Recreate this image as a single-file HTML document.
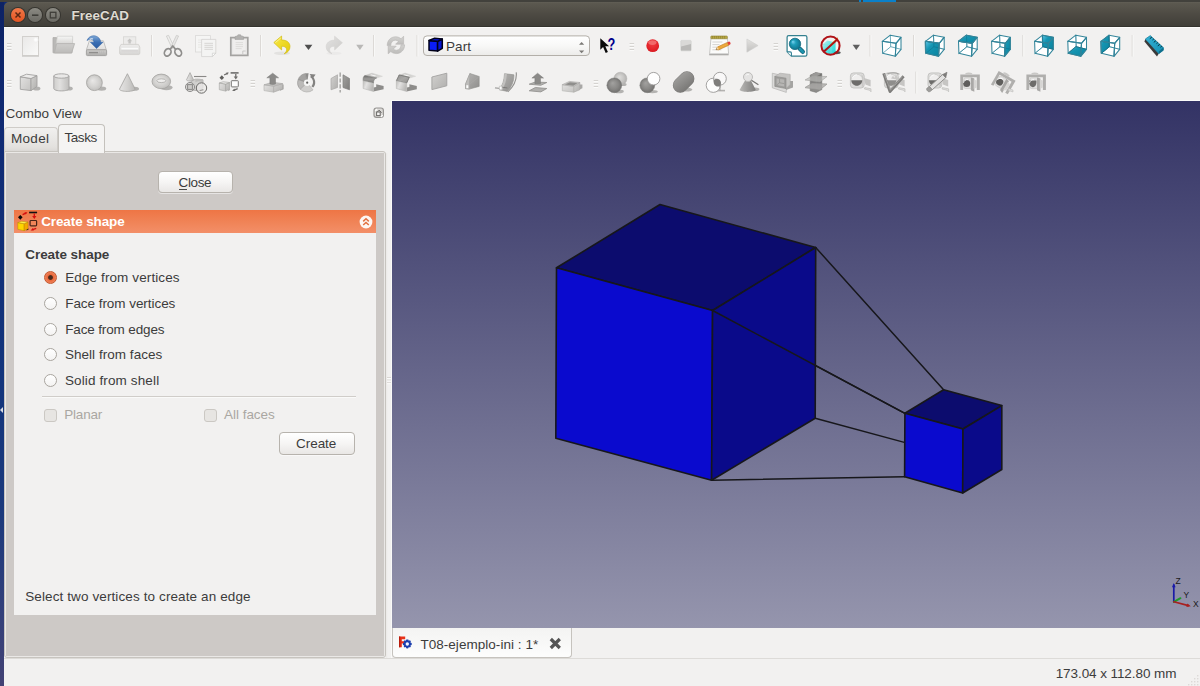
<!DOCTYPE html>
<html>
<head>
<meta charset="utf-8">
<title>FreeCAD</title>
<style>
html,body{margin:0;padding:0;}
body{width:1200px;height:686px;overflow:hidden;position:relative;background:#f2f1f0;font-family:"Liberation Sans",sans-serif;font-size:13.5px;color:#3c3c3c;}
.abs{position:absolute;}
#deskL{left:0;top:0;width:4px;height:686px;background:linear-gradient(#0d2264 0,#102b74 20%,#13357c 55%,#1c3a7c 75%,#34407a 90%,#434274 100%);}
#deskT{left:0;top:0;width:1200px;height:2px;background:#42413c;}
#title{left:4px;top:2px;width:1196px;height:25px;background:linear-gradient(#625f56 0,#5b584f 6%,#4d4a43 50%,#413f39 94%,#34332e 97%,#34332e 100%);border-top-left-radius:5px;box-shadow:0 1px 0 #fbfbfa;}
#title .t{left:67.6px;top:6px;font-weight:bold;font-size:13.4px;line-height:15px;color:#dfdbd2;letter-spacing:0.02px;white-space:nowrap;text-shadow:0 -1px 0 rgba(0,0,0,.35);}
.wb{position:absolute;top:6px;width:14px;height:14px;border-radius:50%;box-shadow:0 0 0 1px #35342f;}
.txt{position:absolute;white-space:nowrap;}
.grip{position:absolute;width:5px;height:8px;}
.grip i{position:absolute;left:0;width:5px;height:1px;background:#cfccc8;box-shadow:0 1px 0 #fbfbfa;}
.sep{position:absolute;width:1px;height:22px;background:#d6d3cf;box-shadow:1px 0 0 #f9f9f8;}
.ico{position:absolute;width:24px;height:24px;overflow:visible;}
.btn{position:absolute;border:1px solid #b7b3ad;border-radius:4px;background:linear-gradient(#ffffff 0,#f6f5f4 50%,#e9e7e5 100%);box-sizing:border-box;box-shadow:0 1px 0 rgba(255,255,255,.5);}
.radio{position:absolute;width:11px;height:11px;border-radius:50%;border:1px solid #a9a59f;background:linear-gradient(#ffffff,#f4f3f2);box-sizing:content-box;}
.radio.on{background:radial-gradient(circle at 50% 50%,#4a2a1c 0,#4a2a1c 1.9px,#e9683a 2.9px,#f0825a 5.5px);border-color:#c3582f;}
.cb{position:absolute;width:11px;height:11px;border:1px solid #cbc8c3;border-radius:3px;background:#e7e5e2;}
</style>
</head>
<body>
<!-- desktop edges -->
<div id="deskL" class="abs"></div>
<div id="deskT" class="abs"></div>
<div class="abs" style="left:4px;top:2px;width:8px;height:8px;background:#0f2a72;"></div>
<div class="abs" style="left:859px;top:0;width:37px;height:1.5px;background:#0a80c9;"></div><div class="abs" style="left:861px;top:0;width:2px;height:2px;background:#45443f;"></div>

<!-- title bar -->
<div id="title" class="abs">
  <div class="wb" style="left:7px;background:linear-gradient(#f1794a,#e55421);"></div>
  <div class="wb" style="left:24px;background:linear-gradient(#8b8a83,#6b6a64);"></div>
  <div class="wb" style="left:42px;background:linear-gradient(#8b8a83,#6b6a64);"></div>
  <svg class="abs" style="left:0;top:0" width="70" height="25" viewBox="0 0 70 25">
    <path d="M11.5 10.5 l5 5 M16.5 10.5 l-5 5" stroke="#5a2714" stroke-width="1.5" fill="none"/>
    <path d="M28 13.2 h6.4" stroke="#3f3e39" stroke-width="1.6" fill="none"/>
    <rect x="46.3" y="10.3" width="5.6" height="5.6" stroke="#3f3e39" stroke-width="1.3" fill="none"/>
  </svg>
  <div class="t abs">FreeCAD</div>
</div>

<!-- TOOLBARS -->
<div id="tb" class="abs" style="left:0;top:0;width:1200px;height:100px;">
<!--TB-->
<svg class="abs" style="left:0;top:28px" width="1200" height="72" viewBox="0 28 1200 72"><defs><linearGradient id="gPaper" x1="0" y1="0" x2="1" y2="1"><stop offset="0" stop-color="#e9e8e7"/><stop offset="1" stop-color="#fafaf9"/></linearGradient><radialGradient id="gSpark" cx="0.5" cy="0.5" r="0.5"><stop offset="0" stop-color="#ffffff"/><stop offset="0.5" stop-color="#fbfbfb"/><stop offset="1" stop-color="#f0efee"/></radialGradient><linearGradient id="gPaper2" x1="0" y1="0" x2="0" y2="1"><stop offset="0" stop-color="#f6f6f5"/><stop offset="1" stop-color="#d6d5d3"/></linearGradient><linearGradient id="gFold" x1="0" y1="0" x2="0" y2="1"><stop offset="0" stop-color="#cfcecc"/><stop offset="1" stop-color="#bcbbb9"/></linearGradient><linearGradient id="gDriveTop" x1="0" y1="0" x2="0" y2="1"><stop offset="0" stop-color="#f1f1f0"/><stop offset="1" stop-color="#e0dfde"/></linearGradient><linearGradient id="gDriveFront" x1="0" y1="0" x2="0" y2="1"><stop offset="0" stop-color="#cfcecc"/><stop offset="1" stop-color="#aeadab"/></linearGradient><linearGradient id="gBlueArrow" x1="0" y1="0" x2="0" y2="1"><stop offset="0" stop-color="#7fa8d6"/><stop offset="0.5" stop-color="#3b6fb4"/><stop offset="1" stop-color="#2c5ca0"/></linearGradient><linearGradient id="gPrinter" x1="0" y1="0" x2="0" y2="1"><stop offset="0" stop-color="#eeedec"/><stop offset="0.5" stop-color="#e2e1e0"/><stop offset="1" stop-color="#d6d5d3"/></linearGradient><linearGradient id="gYellow" x1="0" y1="0" x2="1" y2="1"><stop offset="0" stop-color="#f7e94a"/><stop offset="0.6" stop-color="#ecd61f"/><stop offset="1" stop-color="#e2c810"/></linearGradient><linearGradient id="gRedo" x1="0" y1="0" x2="1" y2="1"><stop offset="0" stop-color="#e2e1e0"/><stop offset="1" stop-color="#cccbc9"/></linearGradient><linearGradient id="gRefresh" x1="0" y1="0" x2="0" y2="1"><stop offset="0" stop-color="#d3d2d0"/><stop offset="1" stop-color="#bcbbb9"/></linearGradient><linearGradient id="gCombo" x1="0" y1="0" x2="0" y2="1"><stop offset="0" stop-color="#ffffff"/><stop offset="0.5" stop-color="#f8f8f7"/><stop offset="1" stop-color="#ecebe9"/></linearGradient><radialGradient id="gRec" cx="0.5" cy="0.4" r="0.6"><stop offset="0" stop-color="#ee3a3f"/><stop offset="0.7" stop-color="#e3232a"/><stop offset="1" stop-color="#d71920"/></radialGradient><linearGradient id="gPlay" x1="0" y1="0" x2="0" y2="1"><stop offset="0" stop-color="#e3e2e0"/><stop offset="0.5" stop-color="#d2d1cf"/><stop offset="1" stop-color="#c1c0be"/></linearGradient><radialGradient id="gTealBall" cx="0.5" cy="0.5" r="0.6" fx="0.3" fy="0.3"><stop offset="0" stop-color="#7fd3f2"/><stop offset="0.35" stop-color="#1f9fbb"/><stop offset="1" stop-color="#0c6a84"/></radialGradient><linearGradient id="gCyan" x1="0" y1="0" x2="1" y2="1"><stop offset="0" stop-color="#b5efef"/><stop offset="0.5" stop-color="#5fe3e3"/><stop offset="1" stop-color="#19d6d8"/></linearGradient><linearGradient id="gTealFace" x1="0" y1="0" x2="1" y2="1"><stop offset="0" stop-color="#5cc5e6"/><stop offset="0.35" stop-color="#1595b2"/><stop offset="1" stop-color="#0b849f"/></linearGradient><linearGradient id="gRuler" x1="0" y1="0" x2="1" y2="1"><stop offset="0" stop-color="#35b4d8"/><stop offset="1" stop-color="#158fb2"/></linearGradient><linearGradient id="gG1" x1="0" y1="0" x2="1" y2="1"><stop offset="0" stop-color="#e2e1e0"/><stop offset="1" stop-color="#c4c3c1"/></linearGradient><linearGradient id="gG2" x1="0" y1="0" x2="1" y2="1"><stop offset="0" stop-color="#d2d1cf"/><stop offset="1" stop-color="#b0afad"/></linearGradient><linearGradient id="gG3" x1="0" y1="0" x2="1" y2="1"><stop offset="0" stop-color="#b6b5b3"/><stop offset="1" stop-color="#8f8e8c"/></linearGradient><linearGradient id="gG4" x1="0" y1="0" x2="1" y2="0"><stop offset="0" stop-color="#c2c1bf"/><stop offset="1" stop-color="#dcdbd9"/></linearGradient><linearGradient id="gG5" x1="0" y1="0" x2="1" y2="1"><stop offset="0" stop-color="#a3a2a0"/><stop offset="1" stop-color="#7d7c7a"/></linearGradient><linearGradient id="gBox2" x1="0" y1="0" x2="0" y2="1"><stop offset="0" stop-color="#686765"/><stop offset="0.5" stop-color="#828180"/><stop offset="1" stop-color="#8f8e8c"/></linearGradient><radialGradient id="gSph" cx="0.5" cy="0.5" r="0.55" fx="0.38" fy="0.36"><stop offset="0" stop-color="#e9e8e7"/><stop offset="0.6" stop-color="#d3d2d0"/><stop offset="1" stop-color="#bdbcba"/></radialGradient><radialGradient id="gSphD" cx="0.5" cy="0.5" r="0.55" fx="0.38" fy="0.34"><stop offset="0" stop-color="#a3a2a0"/><stop offset="0.6" stop-color="#888785"/><stop offset="1" stop-color="#6c6b69"/></radialGradient><radialGradient id="gSphL" cx="0.5" cy="0.5" r="0.55" fx="0.4" fy="0.36"><stop offset="0" stop-color="#dddcda"/><stop offset="0.6" stop-color="#c5c4c2"/><stop offset="1" stop-color="#adacaa"/></radialGradient><linearGradient id="gBand" x1="0" y1="0" x2="0" y2="1"><stop offset="0" stop-color="#6f6e6c"/><stop offset="0.45" stop-color="#9c9b99"/><stop offset="1" stop-color="#7b7a78"/></linearGradient><linearGradient id="gBand2" x1="0" y1="0" x2="1" y2="1"><stop offset="0" stop-color="#8f8e8c"/><stop offset="0.5" stop-color="#a9a8a6"/><stop offset="1" stop-color="#8f8e8c"/></linearGradient><linearGradient id="gFront" x1="0" y1="0" x2="1" y2="0.4"><stop offset="0" stop-color="#bdbcba"/><stop offset="0.4" stop-color="#e3e2e1"/><stop offset="1" stop-color="#b9b8b6"/></linearGradient><linearGradient id="gFuse" gradientUnits="userSpaceOnUse" x1="676" y1="74" x2="690" y2="92"><stop offset="0" stop-color="#a5a4a2"/><stop offset=".55" stop-color="#888785"/><stop offset="1" stop-color="#6f6e6c"/></linearGradient><linearGradient id="gCone" x1="0" y1="0" x2="1" y2="0"><stop offset="0" stop-color="#e6e5e4"/><stop offset="0.5" stop-color="#d3d2d0"/><stop offset="1" stop-color="#b9b8b6"/></linearGradient><linearGradient id="gCyl" x1="0" y1="0" x2="1" y2="0"><stop offset="0" stop-color="#cfcecc"/><stop offset="0.4" stop-color="#e1e0df"/><stop offset="1" stop-color="#bfbebc"/></linearGradient><linearGradient id="gConeD" x1="0" y1="0" x2="1" y2="0"><stop offset="0" stop-color="#b9b8b6"/><stop offset="0.5" stop-color="#9b9a98"/><stop offset="1" stop-color="#7f7e7c"/></linearGradient></defs>
<path d="M7 43.5h4.5M7 46.5h4.5M7 49.5h4.5" stroke="#d5d3d0" stroke-width="1"/><path d="M7 44.5h4.5M7 47.5h4.5M7 50.5h4.5" stroke="#fbfbfa" stroke-width="1"/>
<g><rect x="22.5" y="36.5" width="16" height="19" fill="url(#gPaper)" stroke="#d2d0cd" stroke-width="1"/>
<path d="M22 56.2h17" stroke="#c9c7c4" stroke-width="1"/>
<circle cx="35.8" cy="39.8" r="2.6" fill="url(#gSpark)"/></g>
<g><path d="M53 37.6h3.6l.8 1.4h14.6v13.8H53z" fill="#b9b8b6" stroke="#adacaa" stroke-width=".8"/>
<path d="M57.4 36.2h15.2v8H56.2z" fill="url(#gPaper2)" stroke="#cfcecb" stroke-width=".7"/>
<path d="M56.6 43.6h18l-3 9.4H54.4z" fill="url(#gFold)" stroke="#b2b1af" stroke-width=".8"/></g>
<g><path d="M89.4 40.8h14l2.9 9H86.4z" fill="url(#gDriveTop)" stroke="#b5b4b2" stroke-width=".8"/>
<rect x="86.4" y="49.8" width="20.2" height="5.8" rx="1" fill="url(#gDriveFront)" stroke="#9d9c9a" stroke-width=".9"/>
<path d="M89 52.6h9" stroke="#8f8e8c" stroke-width="1.4"/><path d="M99.5 51.4v2.6M101.5 51.4v2.6M103.5 51.4v2.6" stroke="#b9b8b6" stroke-width=".8"/>
<path d="M87 40.6c1.2-3.6 5-5.6 8.6-4.6c3 .8 4.8 3.2 5.2 6.2h2.2l-6.4 6.4l-6.2-6.4h3.6c-.2-1.6-1.2-2.6-2.6-2.8c-1.600-.2-3.200.2-4.400 1.200z" fill="url(#gBlueArrow)" stroke="#2b5c9e" stroke-width=".5"/>
<path d="M89.6 39.2c1.2-.6 2.400-.6 3.400-.1" stroke="#e9f0f8" stroke-width="1.1" fill="none"/></g>
<g><rect x="123.4" y="36.8" width="12.4" height="8.4" fill="#ecebea" stroke="#d6d5d3" stroke-width=".8"/>
<path d="M129.6 38.4l2.600 2.800h-1.400v2.400h-2.400v-2.400h-1.400z" fill="#c6c5c3"/>
<path d="M121 44.4h17.400l1.400 2.600v6.200c0 .8-.6 1.400-1.400 1.400h-17.400c-.8 0-1.400-.6-1.400-1.400v-6.200z" fill="url(#gPrinter)" stroke="#cfcecc" stroke-width=".8"/>
<path d="M121.400 48.600h16.800" stroke="#fbfbfb" stroke-width="1.600"/><path d="M121.400 50.800h16.800" stroke="#d2d1cf" stroke-width=".8"/></g>
<path d="M151.5 35V56.5" stroke="#dcd9d6" stroke-width="1"/><path d="M152.5 35V56.5" stroke="#f8f8f7" stroke-width="1"/>
<g><path d="M166.400 36l2.200-.6l5.400 11.400l-2 1.400z" fill="#eeedec" stroke="#c6c5c3" stroke-width=".7"/>
<path d="M178.600 36l-2.200-.6l-5.400 11.400l2 1.400z" fill="#e6e5e4" stroke="#c6c5c3" stroke-width=".7"/>
<ellipse cx="167.700" cy="52.400" rx="3.100" ry="3.900" transform="rotate(32 167.700 52.400)" fill="none" stroke="#8f8e8c" stroke-width="1.700"/>
<ellipse cx="178.200" cy="52.400" rx="3.100" ry="3.900" transform="rotate(-32 178.200 52.400)" fill="none" stroke="#8f8e8c" stroke-width="1.700"/>
<path d="M170 49.400l2.800-3.400l2.800 3.400" fill="none" stroke="#8f8e8c" stroke-width="1.700"/></g>
<g><rect x="195.400" y="35.600" width="15" height="16.400" fill="#f5f5f4" stroke="#dad9d7" stroke-width=".8"/>
<path d="M198 40h5M198 42.400h5M198 44.800h4M198 47.200h4" stroke="#e4e3e1" stroke-width=".8"/>
<path d="M201.600 39.400h14.200v13.800l-3.400 3.400h-10.800z" fill="#f4f4f3" stroke="#d3d2d0" stroke-width=".8"/>
<path d="M215.800 53.200h-3.400v3.400z" fill="#fdfdfd" stroke="#cfcecc" stroke-width=".7"/>
<path d="M204.400 43.400h8.600M204.400 45.400h8.600M204.400 47.400h8.600M204.400 49.400h8.600" stroke="#dcdbd9" stroke-width="1.100"/></g>
<g><rect x="230.800" y="37.600" width="17" height="17.800" fill="#e9e8e7" stroke="#a4a3a1" stroke-width="1.700"/>
<rect x="233.200" y="39.600" width="12.200" height="14.200" fill="#efeeed"/>
<path d="M235.600 42.600h7.400M235.600 44.600h7.400M235.600 46.600h7.400M235.600 48.600h6" stroke="#dddcda" stroke-width="1"/>
<path d="M245.600 51h-2.800v3" fill="none" stroke="#c5c4c2" stroke-width=".9"/>
<path d="M235 39.400v-2.200c0-.6.400-1 1-1h1.600v-.8c0-.4.300-.6.600-.6h2.200c.300 0 .600.200.600.600v.8h1.600c.600 0 1 .400 1 1v2.200z" fill="#b3b2b0" stroke="#a09f9d" stroke-width=".6"/></g>
<path d="M260.5 35V56.5" stroke="#dcd9d6" stroke-width="1"/><path d="M261.5 35V56.5" stroke="#f8f8f7" stroke-width="1"/>
<g><ellipse cx="282" cy="53.200" rx="8" ry="1.800" fill="#e3e2e0"/>
<path d="M273.800 42.600l7.800-6.600v4c5.200 0 8.400 2.600 8.400 6.600c0 3.600-2.400 6.200-5.800 7.200c1.600-1.200 2.400-2.600 2.400-4.200c0-2.200-1.800-3.400-5-3.400v3.800z" fill="url(#gYellow)" stroke="#d2bd12" stroke-width=".7" stroke-linejoin="round"/>
<path d="M275.400 42.600l5.400-4.600" stroke="#fbf3a0" stroke-width=".9" fill="none"/></g>
<path d="M304.6 44.8H312.4L308.5 50z" fill="#4f4f4f"/>
<g><ellipse cx="334" cy="53.400" rx="7.600" ry="1.600" fill="#ebeae9"/>
<path d="M342.400 42.800l-7.800-6.600v4c-5.200 0-8.400 2.600-8.400 6.600c0 3.600 2.400 6 5.800 7c-1.600-1.200-2.400-2.600-2.400-4.200c0-2.200 1.800-3.400 5-3.400v3.800z" fill="url(#gRedo)" stroke="#d3d2d0" stroke-width=".6" stroke-linejoin="round"/></g>
<path d="M356.2 44.8H363.6L359.9 50z" fill="#b9b8b6"/>
<path d="M373.5 35V56.5" stroke="#dcd9d6" stroke-width="1"/><path d="M374.5 35V56.5" stroke="#f8f8f7" stroke-width="1"/>
<g fill="url(#gRefresh)" stroke="#b7b6b4" stroke-width=".6" stroke-linejoin="round">
<path d="M387.200 45.600c0-5 3.400-8.800 8.400-8.800c2.200 0 4 .8 5.400 2l2.600-2.600v8h-8l2.800-2.800c-.8-.8-1.800-1.200-3-1.200c-2.800 0-4.600 2.200-4.600 5.400z"/>
<path d="M404.600 44.800c0 5-3.400 8.800-8.400 8.800c-2.200 0-4-.8-5.400-2l-2.600 2.200v-7.600h8l-2.800 2.800c.8.800 1.800 1.200 3 1.200c2.800 0 4.600-2.200 4.600-5.400z"/></g>
<path d="M417.0 35V56.5" stroke="#dcd9d6" stroke-width="1"/><path d="M418.0 35V56.5" stroke="#f8f8f7" stroke-width="1"/>
<g><rect x="423.500" y="35.900" width="166" height="19.600" rx="3.500" fill="url(#gCombo)" stroke="#b3afa9" stroke-width="1"/>
<path d="M579 44.800l2.600-2.800l2.600 2.800z" fill="#7a7875"/><path d="M579 50.600l2.600 2.600l2.600-2.600z" fill="#7a7875"/>
<g stroke="#000018" stroke-width="1.500" stroke-linejoin="round"><path d="M429 40.400l8.600.9v9.800l-8.600-.9z" fill="#0a1cf6"/>
<path d="M437.600 41.300l4.700-2.300v9.300l-4.700 2.800z" fill="#0614d2"/>
<path d="M429 40.400l5.600-2.100l7.700.7l-4.700 2.300z" fill="#0a18e4"/></g>
</g>
<g><path d="M600.300 38.200v11.600l2.800-2.800l2.600 6l2.200-1l-2.600-5.800h3.800z" fill="#0a0a0a"/>
<text x="607.500" y="50.400" font-family="Liberation Sans, sans-serif" font-weight="bold" font-size="16.500" textLength="7.800" lengthAdjust="spacingAndGlyphs" fill="#00008b">?</text></g>
<path d="M629.6 43.5h4.5M629.6 46.5h4.5M629.6 49.5h4.5" stroke="#d5d3d0" stroke-width="1"/><path d="M629.6 44.5h4.5M629.6 47.5h4.5M629.6 50.5h4.5" stroke="#fbfbfa" stroke-width="1"/>
<g><circle cx="652.700" cy="45.700" r="6.400" fill="url(#gRec)"/><ellipse cx="652.400" cy="42.600" rx="4.200" ry="2.400" fill="#f47c7c" opacity=".75"/></g>
<g><rect x="680.800" y="40.400" width="10.400" height="10.400" rx=".8" fill="#dad9d7" stroke="#cfcecc" stroke-width=".6"/><path d="M681 46.600l10-2.600v6.600h-10z" fill="#bab9b7"/></g>
<g><path d="M709.200 54.600h19.400" stroke="#a9a8a6" stroke-width="1.400"/>
<path d="M711 38h16.400l1.200 15.800h-19z" fill="#fbfbfa" stroke="#bdbcba" stroke-width=".8"/>
<rect x="710.800" y="36" width="16.600" height="2.800" rx=".8" fill="#b9a945" stroke="#8f8230" stroke-width=".6"/>
<path d="M712.600 36v2.600M714.600 36v2.600M716.600 36v2.600M718.600 36v2.600M720.600 36v2.600M722.600 36v2.600M724.600 36v2.600" stroke="#8a7d2c" stroke-width=".6"/>
<path d="M712.400 42h10M712.400 44.600h7M712.400 47.200h5M712.400 49.800h9" stroke="#d0cfcd" stroke-width=".9"/>
<path d="M716 49.600l1.400-2.600l10-4.600l1.400 2.800l-10 4.600z" fill="#eda93c" stroke="#b87518" stroke-width=".6"/>
<path d="M727.400 42.400l1.400 2.800l1.200-.600c.600-.300.700-.9.500-1.500l-.500-1c-.300-.500-.900-.700-1.400-.400z" fill="#e2403c"/>
<path d="M716 49.600l1.400-2.600l1.500 2.200z" fill="#f4d9a8"/><path d="M716 49.600l.7-1.200l.6.900z" fill="#333"/></g>
<path d="M746.900 39v13.200l11.200-6.600z" fill="url(#gPlay)" stroke="#cfcecc" stroke-width=".6"/>
<path d="M773.6 43.5h4.5M773.6 46.5h4.5M773.6 49.5h4.5" stroke="#d5d3d0" stroke-width="1"/><path d="M773.6 44.5h4.5M773.6 47.5h4.5M773.6 50.5h4.5" stroke="#fbfbfa" stroke-width="1"/>
<g><path d="M788.700 35.700h16.600c.9 0 1.600.7 1.600 1.600v17.100c0 .9-.7 1.600-1.600 1.600h-13.900l-4.300-4.300v-14.400c0-.9.700-1.600 1.600-1.600z" fill="#fff" stroke="#34808f" stroke-width="1.250"/>
<path d="M787.300 51.900h2.900c.7 0 1.200.5 1.200 1.200v2.800" fill="#fff" stroke="#2f7f93" stroke-width="1.100"/>
<path d="M799.800 48.800l3 3" stroke="#176b80" stroke-width="4.400" stroke-linecap="round"/><path d="M799.900 48.900l2.900 2.900" stroke="#1d94ae" stroke-width="2.600" stroke-linecap="round"/>
<circle cx="795" cy="43.900" r="5.700" fill="url(#gTealBall)" stroke="#176b80" stroke-width=".8"/></g>
<g><ellipse cx="836.500" cy="52.600" rx="4.200" ry="1.700" fill="#2a2a2a" opacity=".8"/>
<path d="M822.800 44.200l4.600-3.600l8.200 1.800v9l-4.600 3l-8.200-2.200z" fill="url(#gCyan)"/>
<path d="M822.800 44.200l8.200 1.600l4.600-3.400M831 45.800v8.600" stroke="#8fd9dc" stroke-width=".6" fill="none"/>
<path d="M830.200 44.600l5.600-5.400l1.200 1.200l-5.400 5.600z" fill="#f0d828"/><path d="M835.800 39.200l1.800-2.200l.6 2.600l-1.200.8z" fill="#e9b54a"/>
<circle cx="830.500" cy="45.700" r="9.100" fill="none" stroke="#b01217" stroke-width="2"/>
<path d="M824 51.600l13.200-12" stroke="#b01217" stroke-width="2"/></g>
<path d="M852.6 44.8H860L856.3 50z" fill="#5f5f5f"/>
<path d="M870.0 35V56.5" stroke="#dcd9d6" stroke-width="1"/><path d="M871.0 35V56.5" stroke="#f8f8f7" stroke-width="1"/>
<g stroke-linejoin="round" stroke-linecap="round"><polygon points="890.3,35.2 901.0,37.3 901.0,49.3 895.3,56.3 882.7,53.3 882.3,41.3" fill="#fff" stroke="none"/><g stroke="#5fa3b3" stroke-width=".9" fill="none"><polyline points="890.3,35.2 890.7,46.7 882.7,53.3"/><polyline points="890.7,46.7 901.0,49.3"/></g><g stroke="#33859a" stroke-width="1.050" fill="none"><polygon points="890.3,35.2 901.0,37.3 896.0,43.3 882.3,41.3"/><polygon points="882.3,41.3 896.0,43.3 895.3,56.3 882.7,53.3"/><polygon points="896.0,43.3 901.0,37.3 901.0,49.3 895.3,56.3"/></g></g>
<path d="M913.5 35V56.5" stroke="#dcd9d6" stroke-width="1"/><path d="M914.5 35V56.5" stroke="#f8f8f7" stroke-width="1"/>
<g stroke-linejoin="round" stroke-linecap="round"><polygon points="933.5,35.2 944.2,37.3 944.2,49.3 938.5,56.3 925.9,53.3 925.5,41.3" fill="#fff" stroke="none"/><g stroke="#5fa3b3" stroke-width=".9" fill="none"><polyline points="933.5,35.2 933.9,46.7 925.9,53.3"/><polyline points="933.9,46.7 944.2,49.3"/></g><polygon points="925.5,41.3 939.2,43.3 938.5,56.3 925.9,53.3" fill="url(#gTealFace)" stroke="#1b7489" stroke-width=".8"/><g stroke="#0d6d86" stroke-width=".7" fill="none" opacity=".7"><polyline points="933.5,35.2 933.9,46.7 925.9,53.3"/><polyline points="933.9,46.7 944.2,49.3"/><polyline points="925.5,41.3 939.2,43.3 938.5,56.3"/><polyline points="939.2,43.3 944.2,37.3"/></g><g stroke="#33859a" stroke-width="1.050" fill="none"><polygon points="933.5,35.2 944.2,37.3 939.2,43.3 925.5,41.3"/><polygon points="925.5,41.3 939.2,43.3 938.5,56.3 925.9,53.3"/><polygon points="939.2,43.3 944.2,37.3 944.2,49.3 938.5,56.3"/></g></g>
<g stroke-linejoin="round" stroke-linecap="round"><polygon points="966.5,35.2 977.2,37.3 977.2,49.3 971.5,56.3 958.9,53.3 958.5,41.3" fill="#fff" stroke="none"/><g stroke="#5fa3b3" stroke-width=".9" fill="none"><polyline points="966.5,35.2 966.9,46.7 958.9,53.3"/><polyline points="966.9,46.7 977.2,49.3"/></g><polygon points="966.5,35.2 977.2,37.3 972.2,43.3 958.5,41.3" fill="url(#gTealFace)" stroke="#1b7489" stroke-width=".8"/><g stroke="#0d6d86" stroke-width=".7" fill="none" opacity=".7"><polyline points="966.5,35.2 966.9,46.7 958.9,53.3"/><polyline points="966.9,46.7 977.2,49.3"/><polyline points="958.5,41.3 972.2,43.3 971.5,56.3"/><polyline points="972.2,43.3 977.2,37.3"/></g><g stroke="#33859a" stroke-width="1.050" fill="none"><polygon points="966.5,35.2 977.2,37.3 972.2,43.3 958.5,41.3"/><polygon points="958.5,41.3 972.2,43.3 971.5,56.3 958.9,53.3"/><polygon points="972.2,43.3 977.2,37.3 977.2,49.3 971.5,56.3"/></g></g>
<g stroke-linejoin="round" stroke-linecap="round"><polygon points="999.6,35.2 1010.3,37.3 1010.3,49.3 1004.6,56.3 992.0,53.3 991.6,41.3" fill="#fff" stroke="none"/><g stroke="#5fa3b3" stroke-width=".9" fill="none"><polyline points="999.6,35.2 1000.0,46.7 992.0,53.3"/><polyline points="1000.0,46.7 1010.3,49.3"/></g><polygon points="1005.3,43.3 1010.3,37.3 1010.3,49.3 1004.6,56.3" fill="url(#gTealFace)" stroke="#1b7489" stroke-width=".8"/><g stroke="#0d6d86" stroke-width=".7" fill="none" opacity=".7"><polyline points="999.6,35.2 1000.0,46.7 992.0,53.3"/><polyline points="1000.0,46.7 1010.3,49.3"/><polyline points="991.6,41.3 1005.3,43.3 1004.6,56.3"/><polyline points="1005.3,43.3 1010.3,37.3"/></g><g stroke="#33859a" stroke-width="1.050" fill="none"><polygon points="999.6,35.2 1010.3,37.3 1005.3,43.3 991.6,41.3"/><polygon points="991.6,41.3 1005.3,43.3 1004.6,56.3 992.0,53.3"/><polygon points="1005.3,43.3 1010.3,37.3 1010.3,49.3 1004.6,56.3"/></g></g>
<path d="M1022.8 35V56.5" stroke="#dcd9d6" stroke-width="1"/><path d="M1023.8 35V56.5" stroke="#f8f8f7" stroke-width="1"/>
<g stroke-linejoin="round" stroke-linecap="round"><polygon points="1042.6,35.2 1053.3,37.3 1053.3,49.3 1047.6,56.3 1035.0,53.3 1034.6,41.3" fill="#fff" stroke="none"/><g stroke="#5fa3b3" stroke-width=".9" fill="none"><polyline points="1042.6,35.2 1043.0,46.7 1035.0,53.3"/><polyline points="1043.0,46.7 1053.3,49.3"/></g><polygon points="1042.6,35.2 1053.3,37.3 1053.3,49.3 1043.0,46.7" fill="url(#gTealFace)" stroke="#1b7489" stroke-width=".8"/><g stroke="#0d6d86" stroke-width=".7" fill="none" opacity=".7"><polyline points="1042.6,35.2 1043.0,46.7 1035.0,53.3"/><polyline points="1043.0,46.7 1053.3,49.3"/><polyline points="1034.6,41.3 1048.3,43.3 1047.6,56.3"/><polyline points="1048.3,43.3 1053.3,37.3"/></g><g stroke="#33859a" stroke-width="1.050" fill="none"><polygon points="1042.6,35.2 1053.3,37.3 1048.3,43.3 1034.6,41.3"/><polygon points="1034.6,41.3 1048.3,43.3 1047.6,56.3 1035.0,53.3"/><polygon points="1048.3,43.3 1053.3,37.3 1053.3,49.3 1047.6,56.3"/></g></g>
<g stroke-linejoin="round" stroke-linecap="round"><polygon points="1075.8,35.2 1086.5,37.3 1086.5,49.3 1080.8,56.3 1068.2,53.3 1067.8,41.3" fill="#fff" stroke="none"/><g stroke="#5fa3b3" stroke-width=".9" fill="none"><polyline points="1075.8,35.2 1076.2,46.7 1068.2,53.3"/><polyline points="1076.2,46.7 1086.5,49.3"/></g><polygon points="1068.2,53.3 1080.8,56.3 1086.5,49.3 1076.2,46.7" fill="url(#gTealFace)" stroke="#1b7489" stroke-width=".8"/><g stroke="#0d6d86" stroke-width=".7" fill="none" opacity=".7"><polyline points="1075.8,35.2 1076.2,46.7 1068.2,53.3"/><polyline points="1076.2,46.7 1086.5,49.3"/><polyline points="1067.8,41.3 1081.5,43.3 1080.8,56.3"/><polyline points="1081.5,43.3 1086.5,37.3"/></g><g stroke="#33859a" stroke-width="1.050" fill="none"><polygon points="1075.8,35.2 1086.5,37.3 1081.5,43.3 1067.8,41.3"/><polygon points="1067.8,41.3 1081.5,43.3 1080.8,56.3 1068.2,53.3"/><polygon points="1081.5,43.3 1086.5,37.3 1086.5,49.3 1080.8,56.3"/></g></g>
<g stroke-linejoin="round" stroke-linecap="round"><polygon points="1109.0,35.2 1119.7,37.3 1119.7,49.3 1114.0,56.3 1101.4,53.3 1101.0,41.3" fill="#fff" stroke="none"/><g stroke="#5fa3b3" stroke-width=".9" fill="none"><polyline points="1109.0,35.2 1109.4,46.7 1101.4,53.3"/><polyline points="1109.4,46.7 1119.7,49.3"/></g><polygon points="1101.0,41.3 1109.0,35.2 1109.4,46.7 1101.4,53.3" fill="url(#gTealFace)" stroke="#1b7489" stroke-width=".8"/><g stroke="#0d6d86" stroke-width=".7" fill="none" opacity=".7"><polyline points="1109.0,35.2 1109.4,46.7 1101.4,53.3"/><polyline points="1109.4,46.7 1119.7,49.3"/><polyline points="1101.0,41.3 1114.7,43.3 1114.0,56.3"/><polyline points="1114.7,43.3 1119.7,37.3"/></g><g stroke="#33859a" stroke-width="1.050" fill="none"><polygon points="1109.0,35.2 1119.7,37.3 1114.7,43.3 1101.0,41.3"/><polygon points="1101.0,41.3 1114.7,43.3 1114.0,56.3 1101.4,53.3"/><polygon points="1114.7,43.3 1119.7,37.3 1119.7,49.3 1114.0,56.3"/></g></g>
<path d="M1132.2 35V56.5" stroke="#dcd9d6" stroke-width="1"/><path d="M1133.2 35V56.5" stroke="#f8f8f7" stroke-width="1"/>
<g><path d="M1144.400 41.400l1-2.400l13.400 14.600l-1.800 2.800z" fill="#3a3a3a"/>
<path d="M1145.300 39l5-3.400l13.100 12v2.600l-4.600 3.600z" fill="url(#gRuler)" stroke="#136f8a" stroke-width=".6"/>
<path d="M1158.800 53.800l4.600-3.600v-2.600l-4.600 3.800z" fill="#0f6f8c"/>
<path d="M1151.800 37.200l-2 1.500M1153.800 39l-1.300 1M1155.800 40.800l-2 1.500M1157.800 42.600l-1.300 1M1159.800 44.400l-2 1.500M1161.800 46.200l-1.300 1" stroke="#072f3c" stroke-width="1"/></g>
<path d="M7 80.5h4.5M7 83.5h4.5M7 86.5h4.5" stroke="#d5d3d0" stroke-width="1"/><path d="M7 81.5h4.5M7 84.5h4.5M7 87.5h4.5" stroke="#fbfbfa" stroke-width="1"/>
<g stroke-linejoin="round"><ellipse cx="36.600" cy="88.400" rx="3.800" ry="2" fill="#b3b2b0"/>
<path d="M20.300 76.800l10.700 1.700v12.100l-10.700-1.300z" fill="url(#gG1)" stroke="#a3a2a0" stroke-width=".9"/>
<path d="M31 78.500l6-2.900v10.800l-6 4.200z" fill="url(#gG2)" stroke="#a3a2a0" stroke-width=".9"/>
<path d="M20.300 76.800l6.200-2.600l10.500 1.400l-6 2.900z" fill="#ecebea" stroke="#a3a2a0" stroke-width=".9"/></g>
<g><ellipse cx="69" cy="88.600" rx="3.800" ry="2" fill="#b3b2b0"/>
<path d="M53.800 76v12.600c0 1.300 3.400 2.300 7.600 2.300s7.600-1 7.600-2.300v-12.600z" fill="url(#gCyl)" stroke="#a3a2a0" stroke-width=".9"/>
<ellipse cx="61.400" cy="76" rx="7.600" ry="2.200" fill="#e9e8e7" stroke="#a3a2a0" stroke-width=".9"/></g>
<g><ellipse cx="101.600" cy="88.600" rx="4.600" ry="2.200" fill="#b3b2b0"/>
<circle cx="94.400" cy="82.700" r="7.900" fill="url(#gSph)" stroke="#a3a2a0" stroke-width=".8"/></g>
<g><ellipse cx="134.600" cy="88.800" rx="4.400" ry="2" fill="#b3b2b0"/>
<path d="M127.400 73.700l-7.900 15.400c0 1.300 3.500 2.300 7.800 2.300s7.800-1 7.800-2.300z" fill="url(#gCone)" stroke="#a3a2a0" stroke-width=".8" stroke-linejoin="round"/></g>
<g><ellipse cx="166.400" cy="87.600" rx="6.200" ry="2.600" fill="#b3b2b0"/>
<ellipse cx="161.300" cy="81.400" rx="9.300" ry="7.300" fill="url(#gSph)" stroke="#a3a2a0" stroke-width=".8"/>
<ellipse cx="161.300" cy="80.700" rx="4.500" ry="1.900" fill="#efeeed" stroke="#a9a8a6" stroke-width=".8"/></g>
<g><path d="M190 72.600l-3.500 7.200c0 .7 1.600 1.200 3.500 1.200s3.500-.5 3.500-1.200z" fill="url(#gCone)" stroke="#a3a2a0" stroke-width=".7"/>
<path d="M194 76.500h12.400" stroke="#8a8987" stroke-width="1.100"/>
<path d="M191 81.500l4.400-2.300l7.600.6v8l-4 3.200l-8-1.200z" fill="#d1d0ce" stroke="#a3a2a0" stroke-width=".7"/>
<path d="M195.400 79.200c2.400-.8 5.600-.6 7.200 .6l-.2 2.400c-2-1.200-5-1.200-7 0z" fill="#bdbcba"/>
<circle cx="190" cy="87" r="4.500" fill="#dedddc" stroke="#8a8987" stroke-width="1"/>
<rect x="187.600" y="84.600" width="4.800" height="4.800" fill="#cbcac8" stroke="#8a8987" stroke-width="1"/>
<circle cx="201.500" cy="88" r="5.200" fill="#e9e8e7" fill-opacity=".75" stroke="#6d6c6a" stroke-width="1"/>
<path d="M199.600 90.800l3.800-1.200" stroke="#9d9c9a" stroke-width="1.200"/></g>
<g transform="translate(215.500,69.400)">
<path d="M15.100 3.500h8" stroke="#6f6e6c" stroke-width="1.600"/>
<path d="M20.300 4.600v3.600" stroke="#6f6e6c" stroke-width="1.300"/><path d="M18.200 7l2.100 3l2.100-3z" fill="#6f6e6c"/>
<rect x="15.800" y="11.300" width="7" height="6.200" rx=".6" fill="#fdfdfd" stroke="#777674" stroke-width="1"/>
<path d="M22.200 19.300l-3.600 1.400" stroke="#6f6e6c" stroke-width="1.300"/><path d="M16.600 21.600l3.200-.1l-1-2.400z" fill="#6f6e6c"/>
<path d="M6.300 5.900l2.300 2.400l-2.300 2.400l-2.300-2.400z" fill="#5f5e5c"/>
<path d="M8.600 5.600l3.800-1.800" stroke="#6f6e6c" stroke-width="1.300"/><path d="M13.400 3.200l-3 .2l1.100 2.200z" fill="#6f6e6c"/>
<path d="M3.800 13.600l6.400 1.100v7l-6.400-1.400z" fill="url(#gG1)" stroke="#a3a2a0" stroke-width=".6"/>
<path d="M10.200 14.700l3.800-1.600v6.600l-3.800 2z" fill="url(#gG2)" stroke="#a3a2a0" stroke-width=".6"/>
<path d="M3.800 13.600l3.900-1.300l6.300.8l-3.800 1.600z" fill="#e6e5e4" stroke="#a3a2a0" stroke-width=".6"/>
<path d="M12.600 21l2-.9" stroke="#a3a2a0" stroke-width="1"/></g>
<path d="M250.6 80.5h4.5M250.6 83.5h4.5M250.6 86.5h4.5" stroke="#d5d3d0" stroke-width="1"/><path d="M250.6 81.5h4.5M250.6 84.5h4.5M250.6 87.5h4.5" stroke="#fbfbfa" stroke-width="1"/>
<g stroke-linejoin="round"><path d="M280 84.600h3.600v4.600l-3.600 1.600z" fill="#a5a4a2"/>
<path d="M264 84.800l9.600 1.400v6l-9.600-1.600z" fill="url(#gG1)" stroke="#b2b1af" stroke-width=".6"/>
<path d="M273.600 86.200l9-2.600v5.400l-9 3.200z" fill="url(#gG2)" stroke="#a9a8a6" stroke-width=".6"/>
<path d="M264 84.800l8.400-2.600l10.200 1.400l-9 2.600z" fill="#c3c2c0" stroke="#a9a8a6" stroke-width=".6"/>
<path d="M272.700 73.200l5.900 4.600h-3.100v6.200l-2.800.6l-2.800-.6v-6.200h-3.100z" fill="#8b8a88" stroke="#7d7c7a" stroke-width=".5"/></g>
<g><path d="M307.200 82.700l-1.600-9.200a9.400 9.400 0 0 0-7.400 6z" fill="#a4a3a1" stroke="#8e8d8b" stroke-width=".6"/>
<path d="M307.200 82.700l-9-3.200a9.400 9.400 0 0 0 2.200 9.800z" fill="#bbbab8" stroke="#8e8d8b" stroke-width=".6"/>
<path d="M307.200 82.700l-6.800 6.600a9.400 9.400 0 0 0 12.600 .6z" fill="#cfcecc" stroke="#a9a8a6" stroke-width=".6"/>
<path d="M307.200 82.700l-1.600-9.200c1.200-.3 2.200-.3 3-.2z" fill="#8e8d8b"/>
<circle cx="307.200" cy="82.700" r="3.300" fill="#f6f6f5"/><circle cx="307.200" cy="82.700" r="1.100" fill="#5f5e5c"/>
<path d="M311 75.400c3 1.400 4.600 4.600 4.200 7.800c-.2 1.800-1 3.200-2 4.400l-1.800-1.400c1.400-1.800 2-3.800 1.400-5.800c-.4-1.400-1.400-2.600-2.600-3.200z" fill="#838280"/>
<path d="M309.600 74l6 .6l-3 4.200z" fill="#838280"/></g>
<g><path d="M331 78.500l6.500-3.700v12.700l-6.500 2.300z" fill="url(#gG2)" stroke="#a9a8a6" stroke-width=".7"/>
<path d="M343 74.800l6.500 3.700v11.300l-6.500-2.300z" fill="url(#gG5)" stroke="#7f7e7c" stroke-width=".7"/>
<path d="M340.200 72.600v20" stroke="#a9a8a6" stroke-width="1.500" stroke-dasharray="4.200 1.600"/></g>
<g stroke-linejoin="round">
<path d="M373.5 87.500l2.700-.5v-2.700l7.400 1.800v3.200l-10.100 2.200z" fill="#8d8c8a"/>
<path d="M364.9 75.500l7-2.400l10.600 3.200l-5.800 1.600z" fill="url(#gG4)" stroke="#cfcecc" stroke-width=".4"/>
<path d="M371.4 74.400l4.800 1.400l-1.400.5l-4.800-1.400z" fill="#fbfbfa"/>
<path d="M363.1 80.800c-.2-3 .4-4.600 1.800-5.300l11.800 2.400c-2.200.8-3.300 2.400-3.200 5.300z" fill="url(#gBand)" stroke="#737270" stroke-width=".5"/>
<path d="M363.1 80.800l10.400 2.400v8.300l-10.400-3z" fill="url(#gFront)" stroke="#b3b2b0" stroke-width=".5"/></g>
<g stroke-linejoin="round">
<path d="M406.7 87.500l2.700-.5v-2.700l7.400 1.800v3.200l-10.100 2.200z" fill="#8d8c8a"/>
<path d="M398.1 75.500l7-2.400l10.600 3.200l-5.800 1.600z" fill="url(#gG4)" stroke="#cfcecc" stroke-width=".4"/>
<path d="M404.6 74.400l4.800 1.400l-1.400.5l-4.800-1.400z" fill="#fbfbfa"/>
<path d="M396.3 80.800l2.900-5.900l10.100 2.400l-2.700 5.900z" fill="url(#gBand2)" stroke="#6f6e6c" stroke-width=".8"/>
<path d="M396.3 80.800l10.400 2.400v8.300l-10.400-3z" fill="url(#gFront)" stroke="#b3b2b0" stroke-width=".5"/></g>
<path d="M431.900 77l14.900-3.800v12.600l-14.900 3.800z" fill="url(#gG2)" stroke="#a3a2a0" stroke-width=".9" stroke-linejoin="round"/>
<g stroke-linejoin="round"><path d="M469.900 73.500l9.300 3v9.900l-9.900 2.700l-3.800-.5v-4.400z" fill="url(#gG3)" stroke="#8f8e8c" stroke-width=".6"/>
<path d="M469.900 73.500l-4.400 10.700v4.400l3.800.5v-4.600z" fill="#bdbcba" stroke="#a3a2a0" stroke-width=".5"/>
<path d="M469.300 84.500l9.900-8" stroke="#a9a8a6" stroke-width=".6"/>
<rect x="466.300" y="85.200" width="2" height="3" fill="#fbfbfa"/></g>
<g stroke-linejoin="round" fill="none"><path d="M504.500 73.700l9.400 1.100c.2 6.400-2 11.800-6.600 16.600l-7.800-1.600c3-4.600 4.800-9.600 5-16.100z" fill="url(#gG3)" stroke="#8f8e8c" stroke-width=".6"/>
<path d="M504.500 73.700c-.2 6.500-2 11.500-5 16.100l2.600.6c2.600-4.800 4.400-10 4.800-16.500z" fill="#c2c1bf"/>
<path d="M516.200 72.400c.8 7.200-2.200 14-8.400 19.400" stroke="#8f8e8c" stroke-width="1.100"/>
<path d="M495 87.800l4.400.6" stroke="#a3a2a0" stroke-width="1.200"/>
<rect x="499.400" y="86.200" width="2.600" height="3.600" fill="#fbfbfa" stroke="#a9a8a6" stroke-width=".5"/>
<path d="M502.400 87.200l5 .8" stroke="#777674" stroke-width=".9"/></g>
<g stroke-linejoin="round"><path d="M529.200 90.800l6.100-3.300l11.500 1l-6 3.400z" fill="#b1b0ae" stroke="#8f8e8c" stroke-width=".8"/>
<path d="M529.200 84.200l6.100-2.200l11.500.5l-6 2.800z" fill="#b1b0ae" stroke="#8f8e8c" stroke-width=".8"/>
<path d="M537.600 73.200l5.900 4.900h-3v5.600h-5.600v-5.600h-3z" fill="#8b8a88" stroke="#7d7c7a" stroke-width=".5"/></g>
<g stroke-linejoin="round"><path d="M579 84.600h3.400v3.600l-3.400 1.600z" fill="#a9a8a6"/>
<path d="M562.300 84.700l11.500 1.700v5.800l-11.500-1.400z" fill="url(#gG1)" stroke="#b2b1af" stroke-width=".6"/>
<path d="M573.800 86.400l6.100-3.900v7.200l-6.100 2.500z" fill="url(#gG2)" stroke="#a9a8a6" stroke-width=".6"/>
<path d="M562.300 84.700l7.100-3.300l10.500 1.100l-6.100 3.900z" fill="#c9c8c6" stroke="#a9a8a6" stroke-width=".6"/>
<path d="M564.800 84.500l5-2.200l7.800.8l-4.200 2.700z" fill="#8f8e8c"/></g>
<path d="M593.7 80.5h4.5M593.7 83.5h4.5M593.7 86.5h4.5" stroke="#d5d3d0" stroke-width="1"/><path d="M593.7 81.5h4.5M593.7 84.5h4.5M593.7 87.5h4.5" stroke="#fbfbfa" stroke-width="1"/>
<g><ellipse cx="623" cy="84.400" rx="3.600" ry="1.600" fill="#b3b2b0"/><ellipse cx="618.800" cy="91.400" rx="5" ry="1.800" fill="#b3b2b0"/>
<circle cx="620.400" cy="78.700" r="6.500" fill="url(#gSphL)" stroke="#b4b3b1" stroke-width=".5"/>
<circle cx="614.300" cy="85.300" r="7.400" fill="url(#gSphD)" stroke="#777674" stroke-width=".5"/></g>
<g><ellipse cx="652.400" cy="91.600" rx="5.400" ry="1.700" fill="#b3b2b0"/>
<circle cx="647.300" cy="85.300" r="7.400" fill="url(#gSphD)" stroke="#777674" stroke-width=".5"/>
<circle cx="653.600" cy="78.700" r="6.300" fill="#fefefe" stroke="#9a9997" stroke-width=".9"/></g>
<g><ellipse cx="686.400" cy="89.600" rx="6" ry="2" fill="#b3b2b0"/>
<path d="M680.300 85.300L686.900 78.700" stroke="#7b7a78" stroke-width="15" stroke-linecap="round"/>
<path d="M680.300 85.300L686.900 78.700" stroke="url(#gFuse)" stroke-width="14" stroke-linecap="round"/></g>
<g><path d="M716 90.600h9" stroke="#b3b2b0" stroke-width="1.600"/>
<circle cx="713.300" cy="85.300" r="7.100" fill="#fdfdfd" stroke="#9a9997" stroke-width=".9"/>
<circle cx="719.900" cy="78.700" r="6.400" fill="#fdfdfd" fill-opacity=".6" stroke="#9a9997" stroke-width=".9"/>
<path d="M714.400 79.600c2.800-1.600 5.400-.6 6.400 2.200c.4 1.400 0 3.200-.8 4.600c-3 .8-5.400-.6-6.200-3.200c-.3-1.200-.1-2.600.6-3.600z" fill="#7f7e7c"/>
<path d="M720 85.600v5" stroke="#9a9997" stroke-width=".9"/></g>
<g><ellipse cx="755.400" cy="89.200" rx="4" ry="1.800" fill="#b3b2b0"/>
<path d="M745.600 79.600l-5.900 10.200c0 1.200 3.600 2.100 8 2.100s8-.9 8-2.100l-5.300-10.200z" fill="url(#gConeD)"/>
<circle cx="748" cy="77" r="4.500" fill="#e4e3e2" stroke="#bdbcba" stroke-width="1"/>
<path d="M746.200 75.200a2.600 2.600 0 0 1 2.600-.8" stroke="#fbfbfa" stroke-width="1" fill="none"/>
<path d="M751.400 80.200l7 4.600" stroke="#777674" stroke-width="1.200"/></g>
<g stroke-linejoin="round"><path d="M772.300 73.200l14 3.200v16l-14-4.600z" fill="#dbdad9" stroke="#b4b3b1" stroke-width=".7"/>
<path d="M786 81h7v6.600l-7 2.400z" fill="#a5a4a2"/>
<path d="M774.800 76.400l5.200-3.200l10.200 1.200v10.200l-4.200 4z" fill="#c5c4c2" stroke="#a9a8a6" stroke-width=".6"/>
<path d="M774.800 76.400l11.200 1.800v10.400l-11.200-2.200z" fill="#9d9c9a" stroke="#8a8987" stroke-width=".6"/>
<path d="M776.600 78.400l7.600 1.200v6.800l-7.600-1.400z" fill="#b6b5b3"/>
<path d="M776.600 85l3-2.200l4.600.8M779.600 82.800v-4" stroke="#8a8987" stroke-width=".6" fill="none"/></g>
<g stroke-linejoin="round"><path d="M805 87.600l7-4l15 .5l-7 5.400z" fill="#bbbab8" stroke="#a3a2a0" stroke-width=".6"/>
<path d="M810.200 75.200l5.400-2.600l6.200 1v16l-5.600 2.800l-6-1.600z" fill="url(#gBox2)" stroke="#6f6e6c" stroke-width=".5"/>
<path d="M810.200 75.200l6 1.200v16" stroke="#8f8e8c" stroke-width=".6" fill="none"/>
<path d="M810.200 75.200l5.400-2.600l6.200 1l-5.600 2.800z" fill="#9a9997"/>
<path d="M805 87.600l7-4l15 .5l-7 5.400z" fill="#bbbab8" fill-opacity=".55" stroke="#a3a2a0" stroke-width=".6"/>
<path d="M805 80l7-4l15 .5l-7 5.400z" fill="#bbbab8" fill-opacity=".7" stroke="#a3a2a0" stroke-width=".6"/></g>
<path d="M837.5 80.5h4.5M837.5 83.5h4.5M837.5 86.5h4.5" stroke="#d5d3d0" stroke-width="1"/><path d="M837.5 81.5h4.5M837.5 84.5h4.5M837.5 87.5h4.5" stroke="#fbfbfa" stroke-width="1"/>
<g stroke-linejoin="round"><path d="M864.0 78l6.600 2v6.600l-5.200-2.200z" fill="#c6c5c3"/>
<path d="M864.8 87.600l6.200 1.200v3l-1.600-1.600l-5-1.200z" fill="#dedddc" stroke="#b9b8b6" stroke-width=".6"/>
<rect x="850.4" y="72.900" width="13.800" height="15.100" rx="3.200" fill="#dddcdb" stroke="#bdbcba" stroke-width=".8"/>
<path d="M861.4 74.600c1.600 1 2 2.600 2 4.400v5.600c0 1.400-.6 2.400-1.600 2.800z" fill="#c9c8c6"/>
<circle cx="856.8" cy="79.900" r="5.700" fill="#efeeed" stroke="#c3c2c0" stroke-width=".6"/>
<path d="M851.3 80.300h11c-.2 3.200-2.600 5.500-5.500 5.500s-5.300-2.300-5.500-5.500z" fill="#6d6c6a"/>
<path d="M852.6 77.600c.8-1.800 2.400-2.800 4.200-2.800" stroke="#fdfdfd" stroke-width="1" fill="none"/></g>
<g stroke-linejoin="round"><path d="M898.0 78l6.600 2v6.600l-5.200-2.200z" fill="#c6c5c3"/>
<path d="M898.8 87.600l6.200 1.200v3l-1.600-1.600l-5-1.200z" fill="#dedddc" stroke="#b9b8b6" stroke-width=".6"/>
<rect x="884.4" y="72.900" width="13.800" height="15.100" rx="3.200" fill="#dddcdb" stroke="#bdbcba" stroke-width=".8"/>
<path d="M895.4 74.600c1.600 1 2 2.600 2 4.400v5.600c0 1.400-.6 2.400-1.600 2.800z" fill="#c9c8c6"/>
<circle cx="890.8" cy="79.900" r="5.700" fill="#efeeed" stroke="#c3c2c0" stroke-width=".6"/>
<path d="M885.3 80.300h11c-.2 3.200-2.600 5.500-5.500 5.500s-5.300-2.300-5.500-5.500z" fill="#8f8e8c"/>
<path d="M886.6 77.600c.8-1.800 2.400-2.800 4.200-2.800" stroke="#fdfdfd" stroke-width="1" fill="none"/></g>
<g fill="none" stroke-linejoin="round"><path d="M883.600 73.400l6.400 18.200l13.600-15.400" stroke="#7d7c7a" stroke-width="2.800"/>
<path d="M884.400 74.200l6 16l12.200-13.600" stroke="#a9a8a6" stroke-width=".8"/>
<path d="M887.400 73.800c3.400-1.200 8.600-1.200 12 .4" stroke="#a3a2a0" stroke-width="1.200"/>
<path d="M891 78.400l2-2.600l1.400 2l1.600-2.400l1.400 2.400l2-1.400l-1 3.400z" fill="#c9c8c6" stroke="none"/></g>
<path d="M915.8 71.6V93.5" stroke="#dcd9d6" stroke-width="1"/><path d="M916.8 71.6V93.5" stroke="#f8f8f7" stroke-width="1"/>
<g stroke-linejoin="round"><path d="M941.6 78l6.600 2v6.600l-5.200-2.200z" fill="#c6c5c3"/>
<path d="M942.4 87.600l6.200 1.200v3l-1.600-1.600l-5-1.200z" fill="#dedddc" stroke="#b9b8b6" stroke-width=".6"/>
<rect x="928.0" y="72.900" width="13.800" height="15.100" rx="3.200" fill="#dddcdb" stroke="#bdbcba" stroke-width=".8"/>
<path d="M939.0 74.600c1.600 1 2 2.600 2 4.400v5.600c0 1.400-.6 2.400-1.600 2.800z" fill="#c9c8c6"/>
<circle cx="934.4" cy="79.900" r="5.700" fill="#efeeed" stroke="#c3c2c0" stroke-width=".6"/>
<path d="M928.9 80.300h11c-.2 3.200-2.600 5.500-5.500 5.500s-5.300-2.300-5.500-5.500z" fill="#6d6c6a"/>
<path d="M930.2 77.600c.8-1.800 2.400-2.800 4.200-2.800" stroke="#fdfdfd" stroke-width="1" fill="none"/></g>
<g stroke-linejoin="round"><path d="M929.400 86.600l13.400-12.200l3 3.200l-13.600 12.200z" fill="#e3e2e1" stroke="#8a8987" stroke-width=".9"/>
<path d="M942.800 74.400l4.200-2.200l-1.200 5.400z" fill="#7d7c7a" stroke="#777674" stroke-width=".6"/>
<path d="M929.400 86.600l2.800 3.200l-2 1.600c-.8.600-1.800.4-2.400-.2l-.8-.9c-.6-.8-.5-1.800.2-2.400z" fill="#9d9c9a" stroke="#8a8987" stroke-width=".7"/></g>
<g><path d="M960.3 74.500h19.500v15.500h-3v-12.700h-13.700v12.700h-2.800z" fill="#b0afad"/>
<path d="M965.3 73.200c1.600-1 5-1 7 0l-.4 1.400h-6.400z" fill="#c9c8c6"/>
<rect x="963.7" y="77.600" width="9.800" height="11" rx="2" fill="#e1e0df" stroke="#c3c2c0" stroke-width=".6"/>
<path d="M970.9 77.400l3.400 1v13.400l-3.400-1.600z" fill="#a9a8a6"/>
<path d="M973.7 79.600l3 .8v7l-3 1.600z" fill="#d6d5d3"/>
<circle cx="966.7" cy="83.600" r="3.500" fill="#5f5e5c"/>
<path d="M963.5 82.800c.6-2.200 2.200-3.400 4.400-3.200" stroke="#fdfdfd" stroke-width=".9" fill="none"/></g>
<g transform="rotate(30 1002.5 83)"><path d="M993.2 74.500h19.500v15.500h-3v-12.700h-13.700v12.700h-2.800z" fill="#b0afad"/>
<path d="M998.2 73.200c1.600-1 5-1 7 0l-.4 1.400h-6.400z" fill="#c9c8c6"/>
<rect x="996.6" y="77.600" width="9.800" height="11" rx="2" fill="#e1e0df" stroke="#c3c2c0" stroke-width=".6"/>
<path d="M1003.8 77.400l3.400 1v13.400l-3.400-1.600z" fill="#a9a8a6"/>
<path d="M1006.6 79.600l3 .8v7l-3 1.600z" fill="#d6d5d3"/>
<circle cx="999.6" cy="83.600" r="3.500" fill="#5f5e5c"/>
<path d="M996.4 82.800c.6-2.200 2.200-3.400 4.400-3.200" stroke="#fdfdfd" stroke-width=".9" fill="none"/></g>
<path d="M1008.600 88.600l4.400 1.400v2l-4.800-1.600z" fill="#dedddc" stroke="#b9b8b6" stroke-width=".5"/>
<g><path d="M1026.4 74.500h19.500v15.500h-3v-12.700h-13.700v12.700h-2.800z" fill="#b0afad"/>
<path d="M1031.4 73.200c1.600-1 5-1 7 0l-.4 1.400h-6.400z" fill="#c9c8c6"/>
<rect x="1029.8" y="77.600" width="9.800" height="11" rx="2" fill="#e1e0df" stroke="#c3c2c0" stroke-width=".6"/>
<path d="M1037.0 77.400l3.400 1v13.400l-3.400-1.600z" fill="#a9a8a6"/>
<path d="M1039.8 79.600l3 .8v7l-3 1.600z" fill="#d6d5d3"/>
<path d="M1029.200 80.600h7.200c.4 3.600-1 6.600-3.500 6.600s-4.100-3-3.700-6.600z" fill="#6d6c6a"/>
<path d="M1029.6 82.800c.6-2.200 2.200-3.400 4.400-3.200" stroke="#fdfdfd" stroke-width=".9" fill="none"/></g>
</svg>
<div class="txt" style="left:446.1px;top:39.0px;line-height:15px;letter-spacing:0.01px;">Part</div>
<!--/TB-->
</div>

<!-- COMBO VIEW -->
<div id="combo" class="abs" style="left:0;top:0;">
<!--COMBO-->
<div class="abs" style="left:4px;top:127px;width:54px;height:25px;box-sizing:border-box;border:1px solid #cfccc8;border-bottom:none;border-radius:4px 4px 0 0;background:linear-gradient(#f1f0ef,#e3e1de 80%,#d9d6d3);"></div>
<div class="abs" style="left:4px;top:151px;width:382px;height:507px;box-sizing:border-box;border:1px solid #c7c4bf;border-radius:0 3px 3px 3px;background:#eae8e6;"></div>
<div class="abs" style="left:6px;top:153px;width:378px;height:503px;background:#cdc9c6;"></div>
<div class="abs" style="left:58px;top:124px;width:47px;height:29px;box-sizing:border-box;border:1px solid #c4c1bc;border-bottom:none;border-radius:4px 4px 0 0;background:#f5f4f3;"></div>
<svg class="abs" style="left:373px;top:107.100px" width="12" height="12" viewBox="0 0 12 12"><rect x="1" y="1" width="9.4" height="9.4" rx="2.4" fill="#dbd9d6" stroke="#989693" stroke-width="1.2"/><path d="M2.6 3.4l1-1M9.300 8.400l-1 1" stroke="#fbfbfa" stroke-width="1.4" stroke-linecap="round"/><rect x="3.600" y="5" width="3.600" height="3.600" fill="#f4f3f2" stroke="#6b6967" stroke-width="1"/><path d="M4.400 5l1.600-1.800l2.600 2.400" fill="none" stroke="#6b6967" stroke-width="1"/></svg>
<div class="btn" style="left:157.5px;top:171px;width:75.5px;height:21.5px;"></div>
<div class="abs" style="left:179.2px;top:189px;width:8.2px;height:1.2px;background:#4a4a4a;"></div>
<div class="abs" style="left:14px;top:210px;width:362px;height:405px;background:#f2f1f0;"></div>
<div class="abs" style="left:14px;top:210px;width:362px;height:22.5px;background:linear-gradient(#ee7545 0,#f08458 55%,#f38f68 100%);"></div>
<svg class="abs" style="left:14px;top:209px" width="26" height="24" viewBox="0 0 26 24">
<path d="M15.1 3.5h8" stroke="#111" stroke-width="1.6"/>
<path d="M20.3 4.6v3.6" stroke="#d40f0f" stroke-width="1.3"/><path d="M18.2 7l2.1 3l2.1-3z" fill="#d40f0f"/>
<rect x="16.1" y="11.5" width="6.5" height="5.4" rx=".8" fill="none" stroke="#4a2417" stroke-width="1.2"/>
<path d="M22.2 19.3l-3.6 1.4" stroke="#d40f0f" stroke-width="1.3"/><path d="M16.6 21.6l3.2-.1l-1-2.4z" fill="#d40f0f"/>
<path d="M6.3 5.9l2.3 2.4l-2.3 2.4l-2.3-2.4z" fill="#0a0a0a"/>
<path d="M8.6 5.6l3.8-1.8" stroke="#d40f0f" stroke-width="1.3"/><path d="M13.4 3.2l-3 .2l1.1 2.2z" fill="#d40f0f"/>
<path d="M3.8 13.6l6.4 1.1v7l-6.4-1.4z" fill="#ffd500" stroke="#b88a00" stroke-width=".5"/>
<path d="M10.2 14.7l3.8-1.6v6.6l-3.8 2z" fill="#f5a800" stroke="#b88a00" stroke-width=".5"/>
<path d="M3.8 13.6l3.9-1.3l6.3.8l-3.8 1.6z" fill="#fff04a" stroke="#b88a00" stroke-width=".5"/>
<path d="M12.6 21l2-.9" stroke="#3a2a10" stroke-width="1"/>
</svg>
<svg class="abs" style="left:359px;top:214.5px" width="14" height="14" viewBox="0 0 14 14"><circle cx="7" cy="7" r="6.4" fill="#fdf6f2"/><path d="M4.2 6.4L7 3.8l2.8 2.6M4.2 10L7 7.4l2.8 2.6" fill="none" stroke="#e2703f" stroke-width="1.5"/></svg>
<div class="radio on" style="left:44px;top:271.0px;"></div>
<div class="radio" style="left:44px;top:297.0px;"></div>
<div class="radio" style="left:44px;top:322.5px;"></div>
<div class="radio" style="left:44px;top:348.0px;"></div>
<div class="radio" style="left:44px;top:374.0px;"></div>
<div class="abs" style="left:42px;top:396px;width:314px;height:1px;background:#d0cdc9;box-shadow:0 1px 0 #fafaf9;"></div>
<div class="cb" style="left:44px;top:408.5px;"></div>
<div class="cb" style="left:204px;top:408.5px;"></div>
<div class="btn" style="left:278.5px;top:432px;width:76.5px;height:22.5px;"></div>
<div class="txt" style="left:5.4px;top:106.0px;line-height:15px;letter-spacing:0.02px;">Combo View</div>
<div class="txt" style="left:11.0px;top:131.0px;line-height:15px;letter-spacing:0.30px;">Model</div>
<div class="txt" style="left:64.5px;top:130.0px;line-height:15px;letter-spacing:-0.46px;">Tasks</div>
<div class="txt" style="left:178.5px;top:175.0px;line-height:15px;letter-spacing:-0.36px;">Close</div>
<div class="txt" style="left:41.2px;top:214.0px;line-height:15px;letter-spacing:-0.11px;font-weight:bold;color:#ffffff;">Create shape</div>
<div class="txt" style="left:25.3px;top:247.0px;line-height:15px;letter-spacing:-0.07px;font-weight:bold;">Create shape</div>
<div class="txt" style="left:65.2px;top:270.0px;line-height:15px;letter-spacing:0.11px;">Edge from vertices</div>
<div class="txt" style="left:65.2px;top:296.0px;line-height:15px;letter-spacing:-0.05px;">Face from vertices</div>
<div class="txt" style="left:65.2px;top:322.0px;line-height:15px;letter-spacing:-0.14px;">Face from edges</div>
<div class="txt" style="left:64.9px;top:347.0px;line-height:15px;letter-spacing:0.04px;">Shell from faces</div>
<div class="txt" style="left:64.9px;top:373.0px;line-height:15px;letter-spacing:0.13px;">Solid from shell</div>
<div class="txt" style="left:64.2px;top:407.0px;line-height:15px;letter-spacing:-0.17px;color:#aaa7a2;">Planar</div>
<div class="txt" style="left:224.1px;top:407.0px;line-height:15px;letter-spacing:-0.04px;color:#aaa7a2;">All faces</div>
<div class="txt" style="left:296.1px;top:436.0px;line-height:15px;letter-spacing:-0.06px;">Create</div>
<div class="txt" style="left:25.2px;top:589.0px;line-height:15px;letter-spacing:0.11px;">Select two vertices to create an edge</div>
<!--/COMBO-->
</div>

<!-- VIEWPORT -->
<div id="vpTop" class="abs" style="left:391px;top:100px;width:809px;height:1px;background:#fbfbfa;"></div>
<div class="abs" style="left:0;top:407px;width:0;height:0;border-top:3.5px solid transparent;border-bottom:3.5px solid transparent;border-right:3.5px solid #d9dde6;"></div>
<div id="vp" class="abs" style="left:392px;top:101px;width:808px;height:527px;background:linear-gradient(#333365 0,#9595ad 100%);overflow:hidden;">
<svg class="abs" style="left:0;top:0" width="808" height="527" viewBox="0 0 808 527">
<g stroke="#17171b" stroke-width="1.6" stroke-linejoin="round" stroke-linecap="round">
<g fill="none" stroke-width="1.5">
<polyline points="423.7,146.5 551.6,288.8"/>
<polyline points="320.6,209.5 512.9,312.3"/>
<polyline points="423.2,317.2 512.3,341.4"/>
<polyline points="319.6,379.2 512.6,375.7"/>
</g>
<polygon points="268.0,103.5 423.7,146.5 320.6,209.5 164.5,166.8" fill="#0c0c6e"/>
<polygon points="164.5,166.8 320.6,209.5 319.6,379.2 163.8,337.3" fill="#0a0ace"/>
<polygon points="320.6,209.5 423.7,146.5 423.2,317.2 319.6,379.2" fill="#0a0a8a"/>
<polygon points="551.6,288.8 609.8,304.6 571.0,328.0 512.9,312.3" fill="#0c0c6e"/>
<polygon points="512.9,312.3 571.0,328.0 570.7,392.0 512.6,375.7" fill="#0a0ace"/>
<polygon points="571.0,328.0 609.8,304.6 609.8,368.5 570.7,392.0" fill="#0a0a8a"/>
<polyline points="320.6,209.5 512.9,312.3" fill="none" stroke-width="1.5"/>
</g>
<!-- axis cross -->
<g stroke-linecap="round" fill="none">
<path d="M781.8 500.8 L781.8 484" stroke="#1a1aa8" stroke-width="1.7"/>
<path d="M781.8 482 l-1.8 4.2 h3.6z" fill="#1a1aa8" stroke="none"/>
<path d="M781.8 500.8 L788.5 497.2" stroke="#1f9a2a" stroke-width="1.9"/>
<path d="M781.8 500.8 L796.5 504.6" stroke="#a82020" stroke-width="1.7"/>
<path d="M798.8 505.2 l-4.4 0.8 l0.9 -3.4z" fill="#a82020" stroke="none"/>
</g>
<g font-family="Liberation Sans, sans-serif" font-size="8.5" fill="#1a1a1a">
<text x="783.6" y="482.6">Z</text>
<text x="791.6" y="496.8">Y</text>
<text x="801" y="506.2">X</text>
</g>
</svg>
</div>

<!-- MDI TAB + STATUS -->
<!--BOTTOM-->
<div class="abs" style="left:386px;top:153px;width:5px;height:505px;background:linear-gradient(90deg,#ebe9e7 0,#f2f1f0 40%);"></div>
<svg class="abs" style="left:386px;top:374px" width="6" height="14" viewBox="386 374 6 14"><path d="M387 377.5h4M387 380.1h4M387 382.700h4" stroke="#dad7d4" stroke-width="1"/><path d="M387 378.5h4M387 381.100h4M387 383.700h4" stroke="#fcfcfb" stroke-width="1"/></svg>
<div class="abs" style="left:391px;top:100px;width:1px;height:558px;background:#fafaf9;"></div>
<div class="abs" style="left:4px;top:658px;width:1196px;height:1px;background:#dddbd8;"></div>
<div class="abs" style="left:392px;top:628px;width:808px;height:30px;background:#f2f1f0;"></div>
<div class="abs" style="left:392px;top:627.5px;width:179.5px;height:30.5px;box-sizing:border-box;border:1px solid #c6c3be;border-top:none;border-radius:0 0 4px 4px;background:linear-gradient(#f4f4f3 0,#f8f8f7 50%,#fdfdfd 100%);"></div>
<svg class="abs" style="left:398px;top:635px" width="15" height="15" viewBox="0 0 15 15">
<path d="M1 1.6h6.2v2.6H3.8v2h2.4v2.4H3.8v3.6H1z" fill="#e8321a"/>
<path d="M1 1.6h1.3v10.6H1z" fill="#b81c0c"/>
<g transform="translate(9.3,9)"><path d="M0-4.6l1 .2l.5 1.2l1.2-.5l.9.9l-.5 1.2l1.2.5l.2 1l-.2 1l-1.2.5l.5 1.2l-.9.9l-1.2-.5l-.5 1.2l-1 .2l-1-.2l-.5-1.2l-1.2.5l-.9-.9l.5-1.2l-1.2-.5l-.2-1l.2-1l1.2-.5l-.5-1.2l.9-.9l1.2.5l.5-1.2z" fill="#1c3fae"/><circle r="1.7" fill="#f4f6ff"/></g>
</svg>
<svg class="abs" style="left:549px;top:637px" width="13" height="13" viewBox="549 637 13 13"><path d="M550.8 639l9 9M559.8 639l-9 9" stroke="#555555" stroke-width="3.2"/></svg>
<svg class="abs" style="left:1187px;top:673px" width="13" height="13" viewBox="0 0 13 13"><g fill="#dcdad7"><rect x="10" y="2" width="1.4" height="1.4"/><rect x="7" y="5" width="1.4" height="1.4"/><rect x="10" y="5" width="1.4" height="1.4"/><rect x="4" y="8" width="1.4" height="1.4"/><rect x="7" y="8" width="1.4" height="1.4"/><rect x="10" y="8" width="1.4" height="1.4"/><rect x="1" y="11" width="1.4" height="1.4"/><rect x="4" y="11" width="1.4" height="1.4"/><rect x="7" y="11" width="1.4" height="1.4"/><rect x="10" y="11" width="1.4" height="1.4"/></g></svg>
<div class="txt" style="left:420.4px;top:637.0px;line-height:15px;letter-spacing:0.04px;">T08-ejemplo-ini : 1*</div>
<div class="txt" style="left:1055.7px;top:666.0px;line-height:15px;letter-spacing:-0.08px;">173.04 x 112.80 mm</div>
<!--/BOTTOM-->

</body>
</html>
